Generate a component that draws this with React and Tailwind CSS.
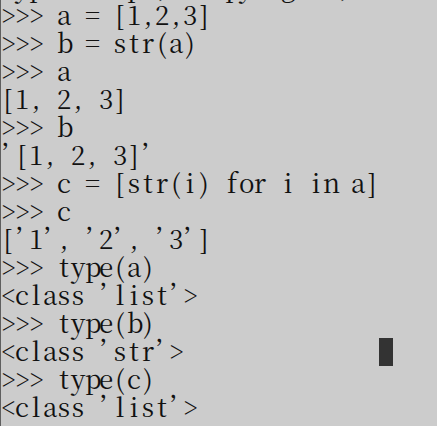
import React from "react";

// console rows; ' is drawn as ’ like the console font shows it
const lines = [
  "Type \"help\", \"copyright\", \"credits\" or \"license\" for more information.",
  ">>> a = [1,2,3]",
  ">>> b = str(a)",
  ">>> a",
  "[1, 2, 3]",
  ">>> b",
  "’[1, 2, 3]’",
  ">>> c = [str(i) for i in a]",
  ">>> c",
  "[’1’, ’2’, ’3’]",
  ">>> type(a)",
  "<class ’list’>",
  ">>> type(b)",
  "<class ’str’>",
  ">>> type(c)",
  "<class ’list’>",
];

const CURSOR_ROW = 13;
const CURSOR_COL = 27;

const Cell = ({ ch }) => (
  <span className="inline-block w-[14px] text-center">{ch === " " ? "\u00a0" : ch}</span>
);

export default function App() {
  return (
    <div className="w-[437px] h-[426px] overflow-hidden bg-[#cccccc] border-l border-[#5f5f5f]">
      <div className="-mt-[28px] text-[#111111] text-[26px] leading-[28px] font-['Noto_Serif_CJK_SC','Liberation_Serif',serif]">
        {lines.map((line, i) => (
          <div key={i} className="h-[28px] whitespace-nowrap">
            {[...line].map((ch, j) => (
              <Cell key={j} ch={ch} />
            ))}
            {i === CURSOR_ROW && (
              <>
                {Array.from({ length: CURSOR_COL - line.length }, (_, j) => (
                  <Cell key={"p" + j} ch=" " />
                ))}
                <span className="relative top-[2px] inline-block w-[14px] h-[28px] align-top bg-[#333333]" />
              </>
            )}
          </div>
        ))}
      </div>
    </div>
  );
}
